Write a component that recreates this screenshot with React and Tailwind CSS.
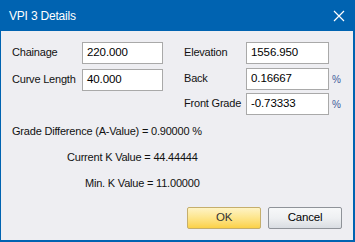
export default function App() {
  const font = { fontFamily: '"Liberation Sans", Arial, sans-serif' };
  const box = "h-[22px] border border-[#a9a9a9] bg-white flex items-center pl-[4px] text-[11.5px] tracking-[-0.1px] text-black shrink-0";
  const row = "flex items-start";
  return (
    <div className="w-[355px] h-[242px] flex flex-col bg-[#0063b1] overflow-hidden whitespace-nowrap" style={font}>
      <div className="h-[31px] flex items-center justify-between pl-[9px] pr-[10px] text-white text-[12px] tracking-[-0.2px]">
        <span className="leading-none">VPI 3 Details</span>
        <svg width="12" height="12" viewBox="0 0 12 12" className="mt-[1px]">
          <path d="M1 1 L11 11 M11 1 L1 11" stroke="white" strokeWidth="1.2" />
        </svg>
      </div>
      <div className="flex-1 ml-[1px] mr-[2px] mb-[2px] bg-[#eeeef2] flex flex-col text-[11px] tracking-[-0.2px] text-[#111]">
        <div className="flex mt-[11px]">
          <div className="flex flex-col pl-[11px] w-[183px]">
            <div className={row}>
              <span className="w-[70px] shrink-0 pt-[2px]">Chainage</span>
              <div className={box + " w-[81px]"}>220.000</div>
            </div>
            <div className={row + " mt-[5px]"}>
              <span className="w-[70px] shrink-0 pt-[2px]">Curve Length</span>
              <div className={box + " w-[81px]"}>40.000</div>
            </div>
          </div>
          <div className="flex flex-col">
            <div className={row}>
              <span className="w-[62px] shrink-0 pt-[2px]">Elevation</span>
              <div className={box + " w-[83px]"}>1556.950</div>
            </div>
            <div className={row + " mt-[4px]"}>
              <span className="w-[62px] shrink-0 pt-[2px]">Back</span>
              <div className={box + " w-[83px]"}>0.16667</div>
              <span className="ml-[3px] mt-[4px] text-[10px] text-[#3c5a9a]">%</span>
            </div>
            <div className={row + " mt-[3px]"}>
              <span className="w-[62px] shrink-0 pt-[2px]">Front Grade</span>
              <div className={box + " w-[83px]"}>-0.73333</div>
              <span className="ml-[3px] mt-[4px] text-[10px] text-[#3c5a9a]">%</span>
            </div>
          </div>
        </div>
        <div className="pl-[11px] mt-[8px] h-[16px] flex items-center">Grade Difference (A-Value) = 0.90000 %</div>
        <div className="pl-[66px] mt-[10px] h-[16px] flex items-center">Current K Value = 44.44444</div>
        <div className="pl-[84px] mt-[10px] h-[16px] flex items-center">Min. K Value = 11.00000</div>
        <div className="flex justify-end gap-[7px] pr-[11px] mt-[16px]">
          <button className="w-[74px] h-[22px] border border-[#c5ae6c] rounded-[2px] bg-gradient-to-b from-[#fef3c4] via-[#fde58a] to-[#fbd145] text-[11.5px] text-[#333]">OK</button>
          <button className="w-[74px] h-[22px] border border-[#8f9399] rounded-[2px] bg-gradient-to-b from-[#f7f8f9] via-[#eef0f2] to-[#d9dde2] text-[11.5px] text-black">Cancel</button>
        </div>
      </div>
    </div>
  );
}
